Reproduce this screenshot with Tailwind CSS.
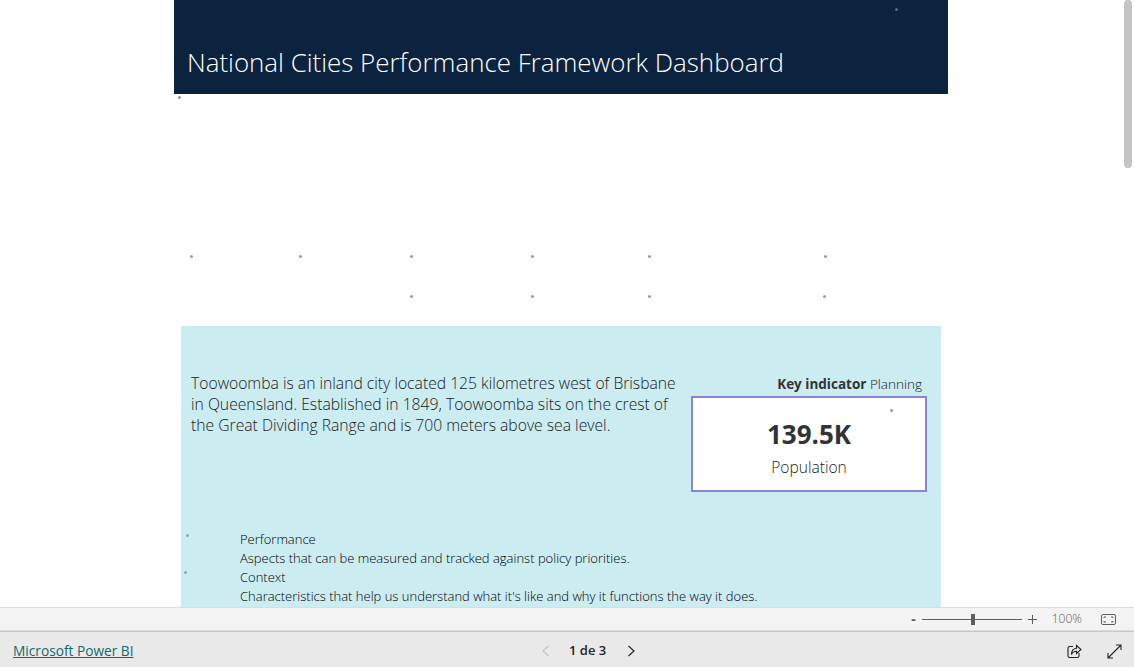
<!DOCTYPE html>
<html lang="en">
<head>
<meta charset="UTF-8">
<title>National Cities Performance Framework Dashboard</title>
<script src="https://cdn.jsdelivr.net/npm/@tailwindcss/browser@4"></script>
</head>
<body class="h-[667px] w-[1134px] overflow-hidden bg-white font-['Open_Sans',sans-serif]">
<div class="flex h-[667px] flex-col">

  <!-- report canvas -->
  <main class="relative h-[607px] overflow-hidden">
    <div class="ml-[174px] w-[774px]">
      <header class="flex h-[94px] items-end bg-[#0c2340] pb-[14px] pl-[13px]">
        <h1 class="text-[25.900px] leading-[36px] font-light text-white whitespace-nowrap">National Cities Performance Framework Dashboard</h1>
      </header>

      <section class="ml-[7px] mt-[232px] h-[290px] w-[760px] bg-[#cbecf1] text-[#1a1a1a]">
        <div class="flex pt-[47px]">
          <p class="w-[500px] pl-[10px] text-[15.700px] leading-[21px] font-light">Toowoomba is an inland city located 125 kilometres west of Brisbane in Queensland. Established in 1849, Toowoomba sits on the crest of the Great Dividing Range and is 700 meters above sea level.</p>
          <div class="ml-[10px] w-[236px]">
            <p class="pr-[5px] text-right text-[13.500px] leading-[23px] font-light"><b class="font-bold text-[#333]">Key indicator</b> Planning</p>
            <div class="flex h-[96px] flex-col items-center border-2 border-[#8d84d8] bg-white pt-[18px]">
              <div class="text-[26px] leading-[36px] font-bold text-[#333]">139.5K</div>
              <div class="mt-[4px] text-[15.600px] leading-[22px] font-light">Population</div>
            </div>
          </div>
        </div>
        <div class="mt-[38px] pl-[59px] text-[13px] leading-[19px] font-light text-black whitespace-nowrap">
          <div>Performance</div>
          <div>Aspects that can be measured and tracked against policy priorities.</div>
          <div>Context</div>
          <div>Characteristics that help us understand what it's like and why it functions the way it does.</div>
        </div>
      </section>
    </div>

    <!-- stray visual markers -->
    <span class="absolute left-[895px] top-[8px] size-[3px] rounded-full bg-[#5b6a80]"></span>
    <span class="absolute left-[178px] top-[96px] size-[3px] rounded-full bg-[#999]"></span>
    <span class="absolute left-[190px] top-[255px] size-[3px] rounded-full bg-[#999]"></span>
    <span class="absolute left-[299px] top-[255px] size-[3px] rounded-full bg-[#999]"></span>
    <span class="absolute left-[410px] top-[255px] size-[3px] rounded-full bg-[#999]"></span>
    <span class="absolute left-[531px] top-[255px] size-[3px] rounded-full bg-[#999]"></span>
    <span class="absolute left-[648px] top-[255px] size-[3px] rounded-full bg-[#999]"></span>
    <span class="absolute left-[824px] top-[255px] size-[3px] rounded-full bg-[#999]"></span>
    <span class="absolute left-[410px] top-[295px] size-[3px] rounded-full bg-[#999]"></span>
    <span class="absolute left-[531px] top-[295px] size-[3px] rounded-full bg-[#999]"></span>
    <span class="absolute left-[648px] top-[295px] size-[3px] rounded-full bg-[#999]"></span>
    <span class="absolute left-[823px] top-[295px] size-[3px] rounded-full bg-[#999]"></span>
    <span class="absolute left-[890px] top-[409px] size-[3px] rounded-full bg-[#999]"></span>
    <span class="absolute left-[186px] top-[534px] size-[3px] rounded-full bg-[#94a8ac]"></span>
    <span class="absolute left-[184px] top-[571px] size-[3px] rounded-full bg-[#94a8ac]"></span>

    <!-- scrollbar thumb -->
    <div class="absolute right-[2px] top-0 h-[168px] w-[8px] rounded-full bg-[#c4c4c4]"></div>
  </main>

  <!-- zoom bar -->
  <div class="flex h-[24px] items-center justify-end border-y border-[#dcdcdc] bg-[#f3f3f3] text-[#605e5c]">
    <span class="text-[14px] leading-none font-bold">-</span>
    <div class="relative mx-[6px] h-[1px] w-[100px] bg-[#605e5c]">
      <span class="absolute left-[49px] top-[-5px] h-[11px] w-[4px] bg-[#605e5c]"></span>
    </div>
    <svg width="9" height="9" viewBox="0 0 9 9" fill="none" stroke="#605e5c"><path d="M4.500 0v9M0 4.500h9"/></svg>
    <span class="ml-[15px] text-[12px] font-light">100%</span>
    <svg class="ml-[19px] mr-[18px]" width="15" height="11" viewBox="0 0 15 11" fill="none" stroke="#605e5c"><rect x=".5" y=".5" width="14" height="10" rx="1.500"/><path d="M3 4V3h2M12 4V3h-2M3 7v1h2M12 7v1h-2"/></svg>
  </div>

  <!-- footer -->
  <footer class="relative flex h-[36px] flex-1 items-center justify-between border-t border-[#c8c8c8] bg-[#e9e9e9] pl-[13px] pr-[12px] pt-[3px]">
    <a href="#" class="text-[13.700px] text-[#0f6b6b] underline">Microsoft Power BI</a>
    <nav class="absolute left-[541px] flex items-center">
      <svg width="9" height="12" viewBox="0 0 9 12" fill="none" stroke="#c4c4c4" stroke-width="1.200"><path d="M7.500 1 2 6l5.500 5"/></svg>
      <span class="ml-[19px] text-[13px] font-semibold text-[#252423]">1 de 3</span>
      <svg class="ml-[21px]" width="9" height="12" viewBox="0 0 9 12" fill="none" stroke="#252423" stroke-width="1.200"><path d="M1.500 1 7 6l-5.500 5"/></svg>
    </nav>
    <div class="flex items-center gap-[25px]">
      <svg width="15" height="15" viewBox="0 0 15 15" fill="none" stroke="#252423" stroke-width="1.100"><path d="M6 2.500H2.500a1.500 1.500 0 0 0-1.500 1.500v8a1.500 1.500 0 0 0 1.500 1.500h8a1.500 1.500 0 0 0 1.500-1.500V9"/><path d="M9.500 1.500 14 5.500l-4.500 4V7.300C7 7.300 5.500 8.300 4.500 10.500c0-3.500 2-6 5-6.300z"/></svg>
      <svg width="15" height="15" viewBox="0 0 15 15" fill="none" stroke="#252423" stroke-width="1.100"><path d="M9 1h5v5M14 1 1 14M1 9v5h5"/></svg>
    </div>
  </footer>
</div>
</body>
</html>
